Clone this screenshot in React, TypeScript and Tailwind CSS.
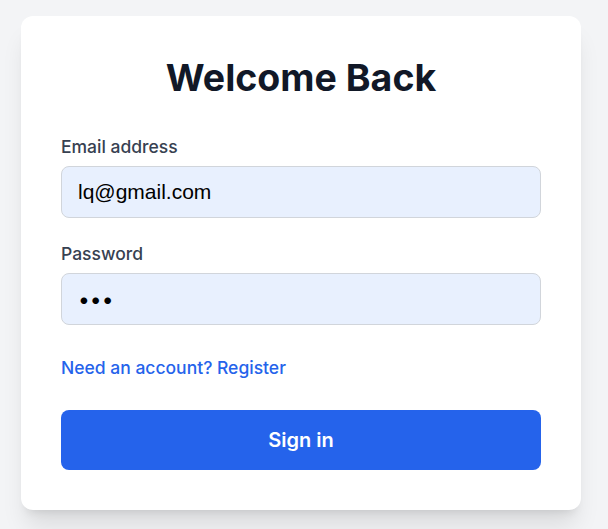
export default function App() {
  return (
    <div className="min-h-screen bg-[#f3f4f6] px-[21px] pt-4 font-['Inter',sans-serif]">
      <div className="w-[560px] rounded-xl bg-white p-10 shadow-xl">
        <h1 className="mt-[2px] mb-[37px] text-center text-[37.5px] leading-10 font-bold text-[#111827]">
          Welcome Back
        </h1>
        <form onSubmit={(e) => e.preventDefault()}>
          <div className="mb-6">
            <label className="mb-[7px] block text-[17.5px] leading-6 font-medium text-[#374151]">
              Email address
            </label>
            <input
              type="email"
              defaultValue="lq@gmail.com"
              className="block h-[52px] w-full rounded-lg border border-[#d1d5db] bg-[#e8f0fe] px-4 font-['Liberation_Sans',Arial,sans-serif] text-[21px] text-black outline-none"
            />
          </div>
          <div>
            <label className="mb-[7px] block text-[17.5px] leading-6 font-medium text-[#374151]">
              Password
            </label>
            <input
              type="password"
              defaultValue="abc"
              className="block h-[52px] w-full rounded-lg border border-[#d1d5db] bg-[#e8f0fe] px-4 font-['Inter',sans-serif] text-[21px] text-black outline-none"
            />
          </div>
          <div className="mt-[31px] leading-6">
            <a href="#" className="text-[17.5px] font-medium text-[#2563eb]">
              Need an account? Register
            </a>
          </div>
          <button
            type="submit"
            className="mt-[30px] block h-[60px] w-full rounded-lg bg-[#2563eb] text-xl font-semibold text-white"
          >
            Sign in
          </button>
        </form>
      </div>
    </div>
  );
}
